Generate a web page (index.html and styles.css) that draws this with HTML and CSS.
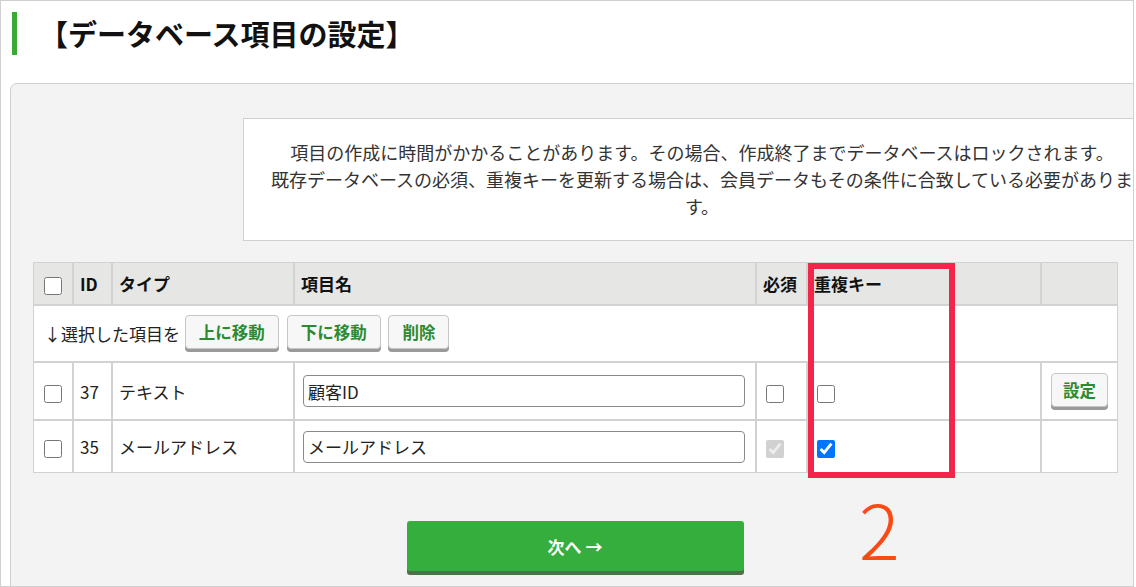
FILE: index.html
```html
<!DOCTYPE html>
<html lang="ja">

<head>
    <meta charset="UTF-8">
    <meta name="viewport" content="width=device-width, initial-scale=1.0">
    <title>データベース項目の設定</title>
    <link rel="stylesheet" href="styles.css">
</head>

<body>
    <div class="frame">
        <h1 class="page-title">【データベース項目の設定】</h1>

        <div class="panel">
            <div class="notice">
                項目の作成に時間がかかることがあります。その場合、作成終了までデータベースはロックされます。<br>
                既存データベースの必須、重複キーを更新する場合は、会員データもその条件に合致している必要があります。
            </div>

            <table class="field-table">
                <colgroup>
                    <col class="col-check">
                    <col class="col-id">
                    <col class="col-type">
                    <col class="col-name">
                    <col class="col-required">
                    <col class="col-unique">
                    <col class="col-action">
                </colgroup>
                <tr class="head-row">
                    <th class="center"><input type="checkbox"></th>
                    <th>ID</th>
                    <th>タイプ</th>
                    <th>項目名</th>
                    <th>必須</th>
                    <th>重複キー</th>
                    <th></th>
                </tr>
                <tr class="bulk-row">
                    <td colspan="7">
                        <span class="bulk-label">↓選択した項目を</span>
                        <button class="sub-button">上に移動</button>
                        <button class="sub-button">下に移動</button>
                        <button class="sub-button">削除</button>
                    </td>
                </tr>
                <tr class="item-row tall">
                    <td class="center"><input type="checkbox"></td>
                    <td>37</td>
                    <td>テキスト</td>
                    <td class="name-cell"><input type="text" class="name-input" value="顧客ID"></td>
                    <td class="box-cell"><input type="checkbox"></td>
                    <td class="box-cell"><input type="checkbox"></td>
                    <td class="box-cell"><button class="sub-button">設定</button></td>
                </tr>
                <tr class="item-row">
                    <td class="center"><input type="checkbox"></td>
                    <td>35</td>
                    <td>メールアドレス</td>
                    <td class="name-cell"><input type="text" class="name-input" value="メールアドレス"></td>
                    <td class="box-cell"><input type="checkbox" checked disabled></td>
                    <td class="box-cell"><input type="checkbox" checked></td>
                    <td></td>
                </tr>
            </table>

            <div class="next-wrap">
                <button class="next-button">次へ →</button>
            </div>
        </div>

        <!-- annotation drawn over the screenshot -->
        <div class="mark-box"></div>
        <div class="mark-number">2</div>
    </div>
</body>

</html>
```

FILE: styles.css
```css
body {
    margin: 0;
    background-color: #fff;
    color: #222;
    font-family: "Noto Sans CJK JP", "Noto Sans", sans-serif;
    width: 1136px;
    height: 587px;
    overflow: hidden;
}

.frame {
    position: relative;
    width: 1134px;
    height: 587px;
    box-sizing: border-box;
    border: 1px solid #d0d0d0;
    overflow: hidden;
}

.page-title {
    margin: 11px 0 0 11px;
    border-left: 5px solid #3aaa35;
    padding-left: 22px;
    height: 43px;
    line-height: 43px;
    font-size: 29px;
    font-weight: bold;
    color: #111;
}

.panel {
    margin: 28px 0 0 9px;
    width: 1130px;
    height: 600px;
    box-sizing: border-box;
    padding: 34px 22px 0 22px;
    background-color: #f3f3f3;
    border: 1px solid #cfcfcf;
    border-radius: 7px 0 0 0;
}

.notice {
    margin-left: 210px;
    width: 918px;
    box-sizing: border-box;
    padding: 20px 20px;
    background-color: #fff;
    border: 1px solid #cfcfcf;
    text-align: center;
    font-size: 18px;
    line-height: 27px;
    color: #333;
}

.field-table {
    margin-top: 21px;
    width: 1085px;
    table-layout: fixed;
    border-collapse: separate;
    border-spacing: 0;
    background-color: #fff;
    font-size: 17px;
}

.col-check { width: 40px; }
.col-id { width: 39px; }
.col-type { width: 182px; }
.col-name { width: 462px; }
.col-required { width: 51px; }
.col-unique { width: 234px; }
.col-action { width: 77px; }

th,
td {
    border: 1px solid #d2d2d2;
    box-sizing: border-box;
    padding: 0 6px;
    text-align: left;
    white-space: nowrap;
}

th {
    height: 43px;
    background-color: #e6e7e5;
    font-weight: bold;
    font-size: 17px;
    color: #111;
}

.center {
    text-align: center;
    padding: 0;
}

input[type="checkbox"] {
    width: 18px;
    height: 18px;
    margin: 0;
    vertical-align: middle;
}

.bulk-row td {
    height: 57px;
    padding: 0 10px;
}

.bulk-label {
    vertical-align: middle;
}

.sub-button {
    height: 34px;
    padding: 0 13px;
    margin: -3px 3px 0 1px;
    vertical-align: middle;
    background-color: #f7f7f7;
    border: 1px solid #c6c6c6;
    border-radius: 4px;
    box-shadow: 0 3px 0 #9a9a9a;
    color: #2c8a30;
    font-family: inherit;
    font-size: 16.5px;
    font-weight: bold;
    cursor: pointer;
}

.item-row td {
    height: 53px;
}

.item-row.tall td {
    height: 58px;
}

.item-row .sub-button {
    padding: 0 11px;
    margin: -3px 0 0 0;
}

.name-cell {
    padding: 0 10px 0 8px;
}

.name-input {
    width: 100%;
    height: 32px;
    box-sizing: border-box;
    border: 1px solid #8a8a8a;
    border-radius: 4px;
    padding: 0 4px;
    font-family: inherit;
    font-size: 17px;
    color: #222;
}

.box-cell {
    padding: 0 9px;
}

.next-wrap {
    margin-top: 48px;
    text-align: center;
}

.next-button {
    width: 337px;
    height: 50px;
    background-color: #36ae3e;
    border: none;
    border-radius: 3px;
    box-shadow: 0 4px 0 #50704a;
    color: #fff;
    font-family: inherit;
    font-size: 17px;
    font-weight: bold;
    cursor: pointer;
}

.mark-box {
    position: absolute;
    left: 807px;
    top: 262px;
    width: 147px;
    height: 215px;
    box-sizing: border-box;
    border: 6px solid #f2264a;
}

.mark-number {
    position: absolute;
    left: 858px;
    top: 488px;
    font-size: 76px;
    font-weight: 300;
    line-height: 1;
    color: #fc4a14;
}
```
